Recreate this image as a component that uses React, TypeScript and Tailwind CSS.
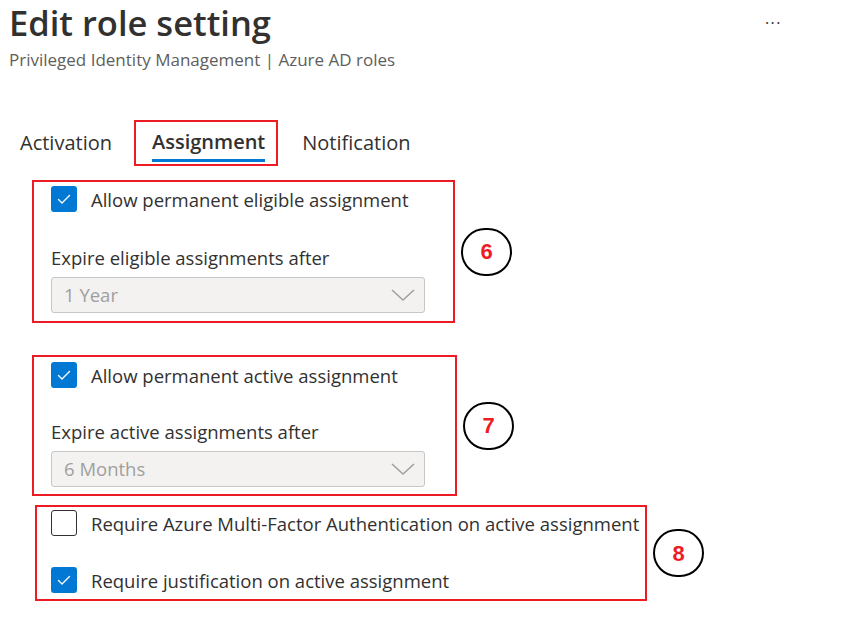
import React from "react";

const font = { fontFamily: '"Open Sans", "Noto Sans", sans-serif' };

function Check({ checked }: { checked: boolean }) {
  if (!checked)
    return <div className="w-[26px] h-[26px] shrink-0 rounded-[3px] border border-[#323130] bg-white" />;
  return (
    <div className="w-[26px] h-[26px] shrink-0 rounded-[3px] bg-[#0078d4] flex items-center justify-center">
      <svg width="16" height="16" viewBox="0 0 16 16" fill="none">
        <path d="M2.5 8.5 L6 12 L13.5 4.5" stroke="white" strokeWidth="1.4" strokeLinecap="round" strokeLinejoin="round" />
      </svg>
    </div>
  );
}

function Dropdown({ value }: { value: string }) {
  return (
    <div className="w-[374px] h-[36px] rounded-[3px] border border-[#c8c6c4] bg-[#f3f2f1] flex items-center justify-between pl-[12px] pr-[8px]">
      <span className="text-[18.5px] text-[#a19f9d]">{value}</span>
      <svg width="26" height="14" viewBox="0 0 26 14" fill="none">
        <path d="M2 2 L13 12 L24 2" stroke="#a19f9d" strokeWidth="1.5" />
      </svg>
    </div>
  );
}

function Circle({ n }: { n: string }) {
  return (
    <div className="w-[51px] h-[48px] rounded-full border-[2.5px] border-black flex items-center justify-center shrink-0">
      <span className="text-[22px] font-bold text-[#ed1c24]" style={{ fontFamily: '"Liberation Sans", Arial, sans-serif' }}>{n}</span>
    </div>
  );
}

function Row({ checked, label }: { checked: boolean; label: string }) {
  return (
    <div className="flex items-center gap-[14px] h-[26px]">
      <Check checked={checked} />
      <span className="text-[18.5px] text-[#323130] leading-[26px] whitespace-nowrap pt-[1px]">{label}</span>
    </div>
  );
}

export default function App() {
  return (
    <div className="w-[853px] h-[633px] bg-white text-[#323130] overflow-hidden" style={font}>
      <div className="flex justify-between w-[782px] pl-[9px]">
        <div>
          <div className="text-[34.5px] font-semibold leading-[46px] text-[#323130]">Edit role setting</div>
          <div className="text-[17px] leading-[22px] text-[#605e5c] mt-[3px]">Privileged Identity Management | Azure AD roles</div>
        </div>
        <div className="text-[16px] text-[#323130] leading-[20px] mt-[13px] tracking-[1.5px]">···</div>
      </div>

      <div className="flex items-center pl-[20px] mt-[49px] h-[46px] text-[20px]">
        <span className="text-[#323130]">Activation</span>
        <div className="ml-[22px] h-[46px] border-[2.5px] border-[#ed1c24] pl-[16px] pr-[11px] flex flex-col justify-end">
          <span className="font-semibold border-b-[3px] border-[#0078d4] leading-[30px] pb-[2px] mb-[2px]">Assignment</span>
        </div>
        <span className="ml-[24px] text-[#323130]">Notification</span>
      </div>

      <div className="pl-[32px] mt-[14px] flex flex-col">
        <div className="flex items-center gap-[6px]">
          <div className="w-[423px] h-[143px] border-[2.5px] border-[#ed1c24] pl-[17px] pt-[4px]">
            <Row checked label="Allow permanent eligible assignment" />
            <div className="text-[18.5px] leading-[26px] mt-[33px]">Expire eligible assignments after</div>
            <div className="mt-[6px]">
              <Dropdown value="1 Year" />
            </div>
          </div>
          <Circle n="6" />
        </div>

        <div className="flex items-center gap-[6px] mt-[32px]">
          <div className="w-[425px] h-[141px] border-[2.5px] border-[#ed1c24] pl-[17px] pt-[5px]">
            <Row checked label="Allow permanent active assignment" />
            <div className="text-[18.5px] leading-[26px] mt-[31px]">Expire active assignments after</div>
            <div className="mt-[6px]">
              <Dropdown value="6 Months" />
            </div>
          </div>
          <Circle n="7" />
        </div>

        <div className="flex items-center gap-[6px] mt-[9px] ml-[3px]">
          <div className="w-[612px] h-[96px] border-[2.5px] border-[#ed1c24] pl-[14px] pt-[3px] flex flex-col gap-[31px]">
            <Row checked={false} label="Require Azure Multi-Factor Authentication on active assignment" />
            <Row checked label="Require justification on active assignment" />
          </div>
          <Circle n="8" />
        </div>
      </div>
    </div>
  );
}
